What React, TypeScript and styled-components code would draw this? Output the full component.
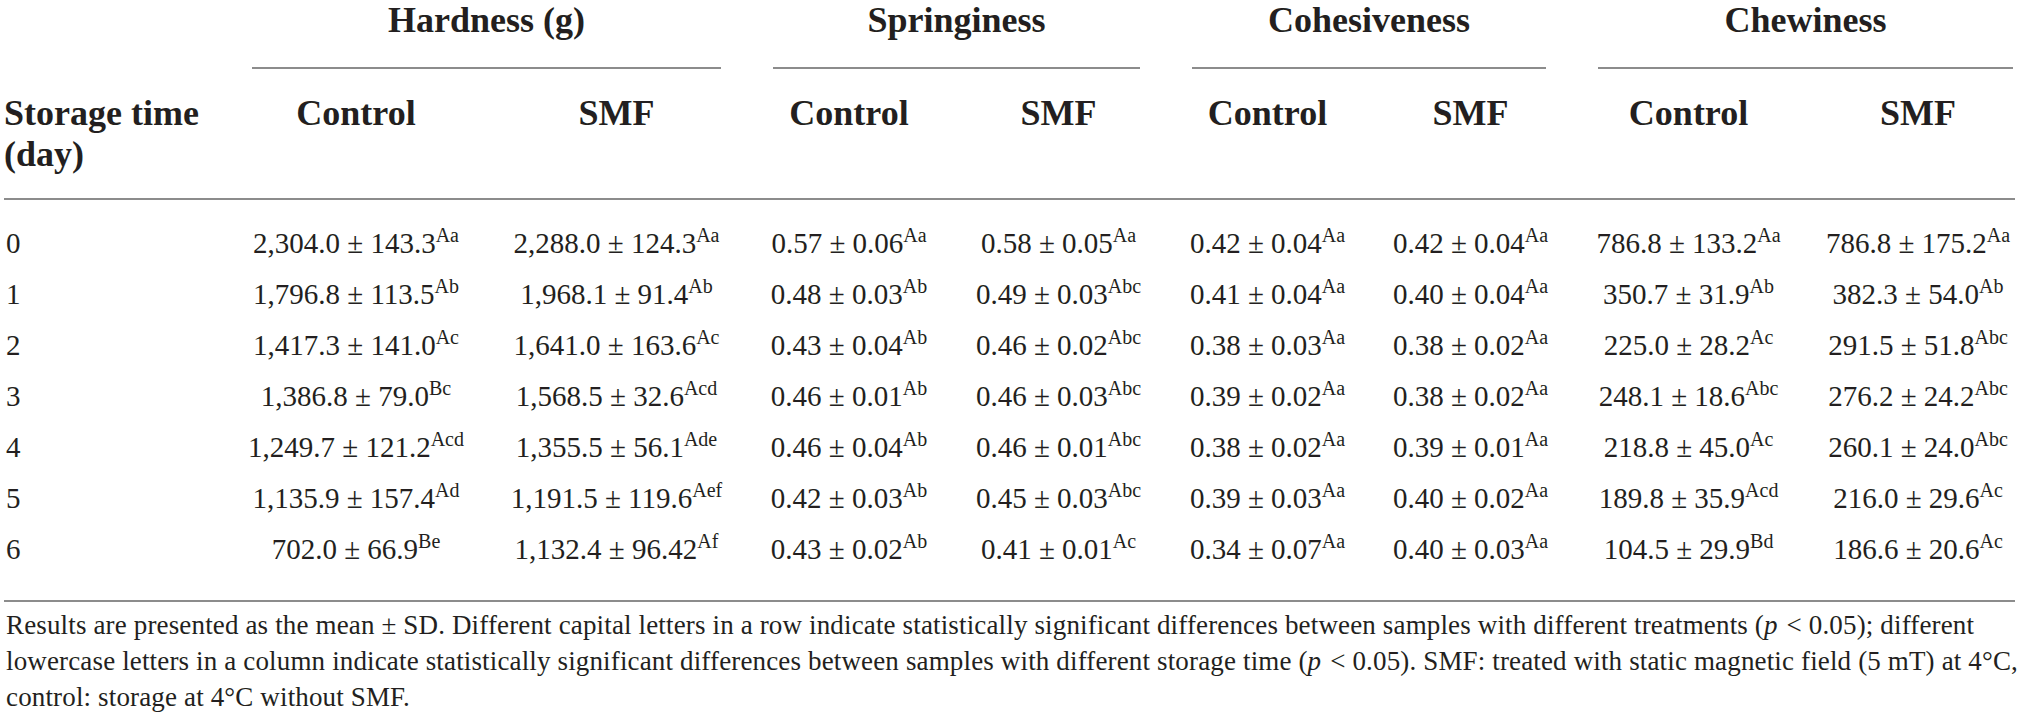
import React from "react";
import styled, { createGlobalStyle } from "styled-components";

type Value = { v: string; s: string };
type Row = { day: string; cells: Value[] };

const v = (text: string): Value => {
  const [num, sup] = text.split("|");
  return { v: num, s: sup };
};

const groups = ["Hardness (g)", "Springiness", "Cohesiveness", "Chewiness"];

const widths = [222, 260, 261, 204, 215, 203, 203, 233, 210];

const rows: Row[] = [
  { day: "0", cells: ["2,304.0 ± 143.3|Aa", "2,288.0 ± 124.3|Aa", "0.57 ± 0.06|Aa", "0.58 ± 0.05|Aa", "0.42 ± 0.04|Aa", "0.42 ± 0.04|Aa", "786.8 ± 133.2|Aa", "786.8 ± 175.2|Aa"].map(v) },
  { day: "1", cells: ["1,796.8 ± 113.5|Ab", "1,968.1 ± 91.4|Ab", "0.48 ± 0.03|Ab", "0.49 ± 0.03|Abc", "0.41 ± 0.04|Aa", "0.40 ± 0.04|Aa", "350.7 ± 31.9|Ab", "382.3 ± 54.0|Ab"].map(v) },
  { day: "2", cells: ["1,417.3 ± 141.0|Ac", "1,641.0 ± 163.6|Ac", "0.43 ± 0.04|Ab", "0.46 ± 0.02|Abc", "0.38 ± 0.03|Aa", "0.38 ± 0.02|Aa", "225.0 ± 28.2|Ac", "291.5 ± 51.8|Abc"].map(v) },
  { day: "3", cells: ["1,386.8 ± 79.0|Bc", "1,568.5 ± 32.6|Acd", "0.46 ± 0.01|Ab", "0.46 ± 0.03|Abc", "0.39 ± 0.02|Aa", "0.38 ± 0.02|Aa", "248.1 ± 18.6|Abc", "276.2 ± 24.2|Abc"].map(v) },
  { day: "4", cells: ["1,249.7 ± 121.2|Acd", "1,355.5 ± 56.1|Ade", "0.46 ± 0.04|Ab", "0.46 ± 0.01|Abc", "0.38 ± 0.02|Aa", "0.39 ± 0.01|Aa", "218.8 ± 45.0|Ac", "260.1 ± 24.0|Abc"].map(v) },
  { day: "5", cells: ["1,135.9 ± 157.4|Ad", "1,191.5 ± 119.6|Aef", "0.42 ± 0.03|Ab", "0.45 ± 0.03|Abc", "0.39 ± 0.03|Aa", "0.40 ± 0.02|Aa", "189.8 ± 35.9|Acd", "216.0 ± 29.6|Ac"].map(v) },
  { day: "6", cells: ["702.0 ± 66.9|Be", "1,132.4 ± 96.42|Af", "0.43 ± 0.02|Ab", "0.41 ± 0.01|Ac", "0.34 ± 0.07|Aa", "0.40 ± 0.03|Aa", "104.5 ± 29.9|Bd", "186.6 ± 20.6|Ac"].map(v) },
];

export default function App() {
  return (
    <>
      <GlobalStyle />
      <Page>
        <Table>
          <colgroup>
            {widths.map((w, i) => (
              <Col key={i} $w={w} />
            ))}
          </colgroup>
          <thead>
            <tr>
              <GroupCell $blank />
              {groups.map((g, i) => (
                <GroupCell key={g} colSpan={2} $last={i === groups.length - 1}>
                  <GroupLabel>{g}</GroupLabel>
                </GroupCell>
              ))}
            </tr>
            <tr>
              <SubHead $left>
                Storage time
                <br />
                (day)
              </SubHead>
              {groups.map((g, i) => (
                <React.Fragment key={g}>
                  <SubHead>Control</SubHead>
                  <SubHead $edge={i === groups.length - 1}>SMF</SubHead>
                </React.Fragment>
              ))}
            </tr>
          </thead>
          <tbody>
            {rows.map((r, ri) => (
              <tr key={r.day}>
                <DayCell $first={ri === 0} $last={ri === rows.length - 1}>
                  {r.day}
                </DayCell>
                {r.cells.map((c, ci) => (
                  <DataCell
                    key={ci}
                    $first={ri === 0}
                    $last={ri === rows.length - 1}
                    $edge={ci === r.cells.length - 1}
                  >
                    {c.v}
                    <Sup>{c.s}</Sup>
                  </DataCell>
                ))}
              </tr>
            ))}
          </tbody>
        </Table>
        <Footnote>
          Results are presented as the mean ± SD. Different capital letters in a row indicate
          statistically significant differences between samples with different treatments (
          <Em>p</Em> &lt; 0.05); different lowercase letters in a column indicate statistically
          significant differences between samples with different storage time (<Em>p</Em> &lt;
          0.05). SMF: treated with static magnetic field (5 mT) at 4°C, control: storage at 4°C
          without SMF.
        </Footnote>
      </Page>
    </>
  );
}

const GlobalStyle = createGlobalStyle`
  html, body {
    margin: 0;
    padding: 0;
    background: #ffffff;
  }
  body {
    font-family: "Liberation Serif", "Times New Roman", serif;
    color: #231f20;
  }
`;

const Page = styled.div`
  width: 2019px;
  padding-left: 4px;
  box-sizing: border-box;
`;

const Table = styled.table`
  width: 2011px;
  table-layout: fixed;
  border-collapse: separate;
  border-spacing: 0;
`;

const Col = styled.col<{ $w: number }>`
  width: ${(p) => p.$w}px;
`;

const GroupCell = styled.th<{ $blank?: boolean; $last?: boolean }>`
  padding: ${(p) => (p.$blank ? "0" : p.$last ? "0 2px 0 26px" : "0 26px")};
  vertical-align: top;
`;

const GroupLabel = styled.div`
  font-size: 36px;
  font-weight: 700;
  line-height: 40px;
  text-align: center;
  padding-bottom: 27px;
  border-bottom: 2px solid #8c8c8c;
`;

const SubHead = styled.th<{ $left?: boolean; $edge?: boolean }>`
  font-size: 36px;
  font-weight: 700;
  line-height: 41px;
  text-align: ${(p) => (p.$left ? "left" : "center")};
  vertical-align: top;
  padding: 24px 0 23px ${(p) => (p.$edge ? "16px" : "0")};
  border-bottom: 2px solid #8c8c8c;
  white-space: nowrap;
`;

const BodyCell = styled.td<{ $first?: boolean; $last?: boolean; $edge?: boolean }>`
  font-size: 29px;
  line-height: 51px;
  white-space: nowrap;
  padding: ${(p) => (p.$first ? "18px" : "0")} 0 ${(p) => (p.$last ? "25px" : "0")}
    ${(p) => (p.$edge ? "16px" : "0")};
  border-bottom: ${(p) => (p.$last ? "2px solid #8c8c8c" : "none")};
`;

const DayCell = styled(BodyCell)`
  text-align: left;
  padding-left: 2px;
`;

const DataCell = styled(BodyCell)`
  text-align: center;
`;

const Sup = styled.sup`
  font-size: 20px;
  line-height: 0;
  vertical-align: super;
`;

const Footnote = styled.p`
  margin: 5px 0 0;
  padding-left: 2px;
  width: 2013px;
  font-size: 27px;
  line-height: 36px;
  letter-spacing: 0.15px;
`;

const Em = styled.i`
  font-style: italic;
  padding-right: 2px;
`;
